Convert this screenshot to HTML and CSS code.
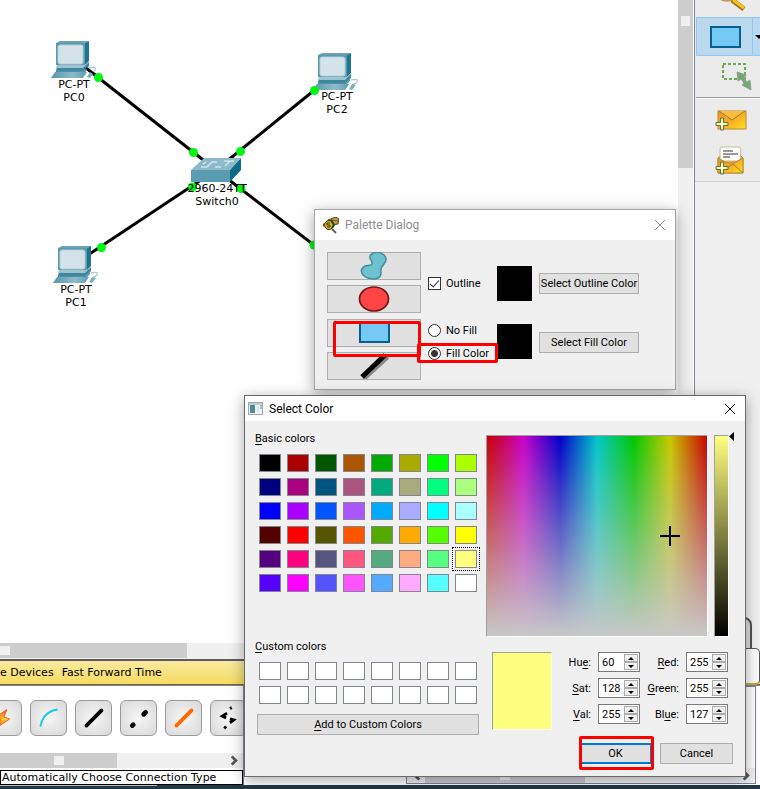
FILE: index.html
```html
<!DOCTYPE html>
<html lang="en">
<head>
<meta charset="utf-8">
<title>Network Simulator</title>
<link rel="stylesheet" href="styles.css">
</head>
<body>
<svg class="defs" aria-hidden="true">
  <defs>
    <linearGradient id="env" x1="0" x2="1" y1="0" y2="1"><stop offset="0" stop-color="#ef9226"/><stop offset=".45" stop-color="#f5a826"/><stop offset="1" stop-color="#ffe01a"/></linearGradient>
    <linearGradient id="base" x1="0" x2="1"><stop offset="0" stop-color="#5795ab"/><stop offset=".6" stop-color="#8fbccb"/><stop offset="1" stop-color="#5e9db2"/></linearGradient>
    <linearGradient id="bolt" x1="0" x2="0" y1="0" y2="1"><stop offset="0" stop-color="#ff3d1f"/><stop offset=".5" stop-color="#ffd02a"/><stop offset="1" stop-color="#f03020"/></linearGradient>
    <symbol id="pc" viewBox="0 0 46 38">
      <path d="M5 2 9 0H38L34 3H5z" fill="#6ba3b6"/>
      <path d="M33 3 38 0V20L33 25z" fill="#1d7690"/>
      <path d="M5 2H34V24H5z" fill="#5b99b0"/>
      <rect x="7" y="4" width="25" height="19" rx="2" fill="#d4e3ea" stroke="#b4cfd9"/>
      <path d="M6 25H33L38 21V25L33 30H5z" fill="#3f879e"/>
      <path d="M6 24H33L36 23 32 27H5z" fill="#9cc3d0"/>
      <path d="M5 30H33L37 26V28L32 33H4z" fill="#4f92a8"/>
      <path d="M4 31H36L32 37H0z" fill="url(#base)"/>
      <path d="M38 27Q46 25 44 29 43 31 40 31" fill="none" stroke="#a9c9d4" stroke-width="1.3"/>
      <path d="M39 31 43 32 39 37 36 36z" fill="#7aafc0"/>
    </symbol>
    <symbol id="plus" viewBox="0 0 14 14">
      <path d="M5.5 1H8.500V5.500H13V8.500H8.500V13H5.500V8.500H1V5.500H5.500z" fill="#e7f06b" stroke="#5d7050"/>
      <path d="M7 3V11M3 7H11" stroke="#fff" stroke-width="1"/>
    </symbol>
  </defs>
</svg>

<main class="app">
  <div class="upper">
    <section class="main">
      <div class="work">
        <div class="canvas">
          <svg class="links" width="678" height="643" viewBox="0 0 678 643" aria-hidden="true">
            <g stroke="#000" stroke-width="3"><path d="M86 68 216 170"/><path d="M322 84 216 170"/><path d="M88 255 216 170"/><path d="M216 170 340 265"/></g>
            <use href="#pc" x="51" y="41" width="46" height="38"/>
            <use href="#pc" x="313" y="53" width="46" height="38"/>
            <use href="#pc" x="53" y="246" width="46" height="38"/>
            <path d="M86 68 96 75" stroke="#000" stroke-width="2"/>
            <g>
              <path d="M191 170 204 158H241L230 170z" fill="#8eb9c9"/>
              <path d="M241 158V170L230 182V170z" fill="#0d6d88"/>
              <path d="M191 170H230V182H191z" fill="#5b9bb2"/>
              <path d="M201 167h6l5-5h5M215 167h6M225 166l5-5h4M203 164l3-2M229 161h-5" stroke="#d2e6ed" stroke-width="1.5" fill="none"/>
            </g>
            <g fill="#00f710"><circle cx="98.500" cy="77.500" r="4.5"/><circle cx="193.500" cy="152.500" r="4.5"/><circle cx="240.500" cy="151.500" r="4.5"/><circle cx="314.500" cy="90.500" r="4.5"/><circle cx="101.500" cy="247.500" r="4.5"/><circle cx="192.500" cy="187" r="4.5"/><circle cx="241" cy="188.500" r="4.5"/><circle cx="314" cy="245" r="4.5"/></g>
          </svg>
          <p class="node pc0">PC-PT<br>PC0</p>
          <p class="node pc2">PC-PT<br>PC2</p>
          <p class="node pc1">PC-PT<br>PC1</p>
          <p class="node sw">2960-24TT<br>Switch0</p>
        </div>
        <div class="vscroll"><div class="thumb"><i class="grip"></i></div></div>
      </div>
      <div class="hscroll"><div class="thumb"><i class="grip"></i></div></div>
    </section>
    <aside class="side">
      <div class="drawer">
        <button class="item zoom" aria-label="Inspect"><svg width="34" height="12" viewBox="0 0 34 12"><path d="M6 -3Q9 2 18 -1" fill="none" stroke="#c79b52" stroke-width="3"/><path d="M18 0 30 9" stroke="#9a741c" stroke-width="5"/><path d="M19 0 30 8" stroke="#f6c223" stroke-width="3"/></svg></button>
        <button class="item active" aria-label="Draw rectangle"><svg width="31" height="22" viewBox="0 0 31 22"><rect x="1" y="1" width="29" height="20" fill="#76c9f5" stroke="#06608f" stroke-width="2"/></svg><svg class="caret" width="8" height="4" viewBox="0 0 8 4"><path d="M0 0H8L4 4z"/></svg></button>
        <button class="item resize" aria-label="Resize shape"><svg width="30" height="30" viewBox="0 0 30 30"><rect x="1" y="2" width="22" height="15" fill="none" stroke="#69ad50" stroke-width="2" stroke-dasharray="3 2"/><path d="M15 10 24 13 22 16 25 20 28 18 29 28 20 23 22 21 19 17 16 19z" fill="#70aa6c" stroke="#9c9e99"/></svg></button>
        <hr>
        <button class="item mail" aria-label="Add simple message"><svg width="32" height="22" viewBox="0 0 32 22"><rect x="3" y="1" width="28" height="18" fill="url(#env)" stroke="#b98a35"/><path d="M4 1 17 10 30 1" fill="#f6bd3e" stroke="#a77c3a"/><use href="#plus" x="0" y="7" width="14" height="14"/></svg></button>
        <button class="item mail2" aria-label="Add complex message"><svg width="32" height="30" viewBox="0 0 32 30"><path d="M3 12 6 9H25L28 12V27H3z" fill="#f3a52a" stroke="#b98a35"/><path d="M5 3Q5 1 8 1H23Q26 1 26 3L25 15H5z" fill="#fff" stroke="#c8b890"/><path d="M8 5H18M8 8H23M8 11H15" stroke="#9a9a9a" stroke-width="2"/><path d="M3 12 12 17H19L28 12V27H3z" fill="url(#env)" stroke="#b98a35"/><path d="M4 27 18 18 28 27" fill="none" stroke="#a77c3a"/><use href="#plus" x="0" y="15" width="14" height="14"/></svg></button>
      </div>
    </aside>
  </div>
  <div class="timebar"><span>e Devices</span><span>Fast Forward Time</span><i class="tab"></i><i class="mode"></i></div>
  <div class="lower">
    <div class="connections">
      <div class="tools">
        <button class="tool" aria-label="Automatic"><svg viewBox="0 0 37 36"><path d="M22 9 9 18 16 19 10 29 25 19 19 17z" fill="url(#bolt)" stroke="#e8641c"/></svg></button>
        <button class="tool" aria-label="Console"><svg viewBox="0 0 37 36"><path d="M10 27Q13 11 28 9" fill="none" stroke="#14c9f5" stroke-width="2"/></svg></button>
        <button class="tool" aria-label="Straight-through"><svg viewBox="0 0 37 36"><path d="M11 26 27 10" stroke="#000" stroke-width="4" stroke-linecap="round"/></svg></button>
        <button class="tool" aria-label="Cross-over"><svg viewBox="0 0 37 36"><path d="M12 26 13 25M24 14 26 12" stroke="#000" stroke-width="5" stroke-linecap="round"/></svg></button>
        <button class="tool" aria-label="Fiber"><svg viewBox="0 0 37 36"><path d="M11 26 27 10" stroke="#ff6a00" stroke-width="4" stroke-linecap="round"/></svg></button>
        <button class="tool" aria-label="Phone"><svg viewBox="0 0 37 36"><path d="M20 8 22 7M17 13 12 16 16 18M20 19 24 20 20 23M14 29 16 27" fill="none" stroke="#000" stroke-width="3"/></svg></button>
      </div>
      <div class="hscroll small"><div class="thumb"><i class="grip"></i></div><svg class="arrow" viewBox="0 0 8 8"><path d="M2 1 5 4 2 7" fill="none" stroke="#555" stroke-width="2"/></svg></div>
      <p class="status">Automatically Choose Connection Type</p>
    </div>
    <div class="events">
      <div class="hscroll inner"><svg class="arrow" viewBox="0 0 8 8"><path d="M6 1 3 4 6 7" fill="none" stroke="#555" stroke-width="2"/></svg><div class="thumb"><i class="grip"></i></div><svg class="arrow end" viewBox="0 0 8 8"><path d="M2 1 5 4 2 7" fill="none" stroke="#555" stroke-width="2"/></svg></div>
    </div>
  </div>
</main>
<footer class="taskbar"><i></i></footer>

<section class="window palette" aria-label="Palette Dialog">
  <header class="title">
    <svg width="16" height="17" viewBox="0 0 16 17"><path d="M5 3 13 0 16 2 15 7 8 8z" fill="#c79a45" stroke="#5d431d"/><path d="M8 3 15 4" stroke="#7b5a22"/><circle cx="6" cy="8" r="4.5" fill="#d6b820" stroke="#312b12"/><path d="M8 3 11 8 9 11" stroke="#174c1c" stroke-width="2" fill="none"/><path d="M7 6H4V8H7V10H4" fill="none" stroke="#3c3510"/><path d="M9 12 13 16" stroke="#666" stroke-width="2"/><path d="M0 8H2" stroke="#754a35" stroke-width="3"/></svg>
    <h2>Palette Dialog</h2>
    <button class="close" aria-label="Close"><svg width="12" height="12" viewBox="0 0 12 12"><path d="M1 1 11 11M11 1 1 11" stroke="currentColor"/></svg></button>
  </header>
  <div class="palette-body">
    <div class="shapes">
      <button class="btn" aria-label="Freeform"><svg width="30" height="28" viewBox="0 0 30 28"><path d="M14 1Q20 -1 25 3 29 7 25 12 21 16 22 21 22 26 16 27 8 27 4 23 0 17 6 14L12 13Q14 12 12 8 9 4 14 1z" fill="#6fc1cf" stroke="#448e99" stroke-width="1.5"/></svg></button>
      <button class="btn" aria-label="Ellipse"><svg width="32" height="26" viewBox="0 0 32 26"><ellipse cx="16" cy="13" rx="14.5" ry="12" fill="#ff4545" stroke="#751818" stroke-width="1.7"/></svg></button>
      <button class="btn" aria-label="Rectangle"><svg width="31" height="21" viewBox="0 0 31 21"><rect x="1" y="1" width="29" height="19" fill="#76c9f5" stroke="#06608f" stroke-width="2"/></svg></button>
      <button class="btn" aria-label="Line"><svg width="30" height="26" viewBox="0 0 30 26"><path d="M5 26 29 4" stroke="#888" stroke-width="4"/><path d="M3 24 26 2" stroke="#000" stroke-width="5"/></svg></button>
    </div>
    <div class="options">
      <label class="check"><input type="checkbox" checked>Outline</label>
      <div class="black"></div>
      <button class="btn pick">Select Outline Color</button>
      <div class="radios">
        <label class="check"><input type="radio" name="fill">No Fill</label>
        <label class="check"><input type="radio" name="fill" checked>Fill Color</label>
      </div>
      <div class="black"></div>
      <button class="btn pick">Select Fill Color</button>
    </div>
  </div>
  <i class="mark mark-rect"></i><i class="mark mark-fill"></i>
</section>

<section class="window colors" aria-label="Select Color">
  <header class="title">
    <svg width="15" height="13" viewBox="0 0 15 13"><rect x=".5" y=".5" width="14" height="12" fill="#f2f2f2" stroke="#a2a6aa"/><path d="M1 1H14V3H1z" fill="#c5c9cc"/><path d="M2 3H7V11H2z" fill="#498f92"/><path d="M2 3H6L2 8z" fill="#4b83b4"/><path d="M9 4H11V10H9z" fill="#d7e6e2"/><path d="M12 3H14V7H12z" fill="#9fc3de"/></svg>
    <h2>Select Color</h2>
    <button class="close" aria-label="Close"><svg width="12" height="12" viewBox="0 0 12 12"><path d="M1 1 11 11M11 1 1 11" stroke="currentColor"/></svg></button>
  </header>
  <div class="color-body">
    <div class="left">
      <h3><u>B</u>asic colors</h3>
      <div class="grid" id="basic"></div>
      <h3 class="custom-title"><u>C</u>ustom colors</h3>
      <div class="grid" id="custom"></div>
      <button class="btn add"><span><u>A</u>dd to Custom Colors</span></button>
    </div>
    <div class="right">
      <div class="pickers">
        <div class="spectrum"><svg class="cross" width="20" height="20" viewBox="0 0 20 20"><path d="M10 0V20M0 10H20" stroke="#000" stroke-width="2"/></svg></div>
        <div class="value"></div>
        <svg class="pointer" width="5" height="9" viewBox="0 0 5 9"><path d="M5 0V9L0 4.5z"/></svg>
      </div>
      <div class="details">
        <div class="current"></div>
        <div class="fields">
          <label for="hue">Hu<u>e</u>:</label><div class="spin"><input id="hue" value="60"><span><button aria-label="Hue up"></button><button aria-label="Hue down"></button></span></div>
          <label for="red"><u>R</u>ed:</label><div class="spin"><input id="red" value="255"><span><button aria-label="Red up"></button><button aria-label="Red down"></button></span></div>
          <label for="sat"><u>S</u>at:</label><div class="spin"><input id="sat" value="128"><span><button aria-label="Sat up"></button><button aria-label="Sat down"></button></span></div>
          <label for="green"><u>G</u>reen:</label><div class="spin"><input id="green" value="255"><span><button aria-label="Green up"></button><button aria-label="Green down"></button></span></div>
          <label for="val"><u>V</u>al:</label><div class="spin"><input id="val" value="255"><span><button aria-label="Val up"></button><button aria-label="Val down"></button></span></div>
          <label for="blue">Bl<u>u</u>e:</label><div class="spin"><input id="blue" value="127"><span><button aria-label="Blue up"></button><button aria-label="Blue down"></button></span></div>
        </div>
      </div>
      <div class="actions"><button class="btn ok">OK</button><button class="btn">Cancel</button></div>
    </div>
  </div>
  <i class="mark mark-ok"></i>
</section>
<script src="swatches.js"></script>
</body>
</html>
```
FILE: styles.css
```css
* { box-sizing: border-box; }
body { margin: 0; min-height: 100vh; display: flex; flex-direction: column; position: relative; background: #f0f0f0; color: #000; font-family: "DejaVu Sans", sans-serif; font-size: 11px; }
button, input { font: inherit; color: inherit; margin: 0; padding: 0; }
h2, h3, p { margin: 0; font-weight: normal; }
svg { display: block; flex: none; }
u { text-underline-offset: 2px; }
.defs { position: absolute; width: 0; height: 0; }

.app { flex: 1; display: flex; flex-direction: column; }
.upper { flex: 1; display: grid; grid-template-columns: minmax(0, 1fr) 66px; }
.main { display: flex; flex-direction: column; min-width: 0; }
.work { flex: 1; display: flex; background: #fff; }
.canvas { flex: 1; position: relative; overflow: hidden; }
.links { position: absolute; left: 0; top: 0; }
.node { position: absolute; transform: translateX(-50%); text-align: center; line-height: 13px; white-space: nowrap; }
.pc0 { left: 74px; top: 78px; }
.pc2 { left: 337px; top: 90px; }
.pc1 { left: 76px; top: 283px; }
.sw { left: 217px; top: 182px; }

.thumb { background: #cdcdcd; display: flex; }
.grip { background: #f0f0f0; }
.vscroll { width: 16px; background: #f0f0f0; border-right: 1px solid #fff; }
.vscroll .thumb { height: 168px; }
.vscroll .grip { width: 9px; height: 10px; margin: 16px 3px; }
.hscroll { height: 15px; display: flex; align-items: stretch; background: #f0f0f0; }
.hscroll .thumb { width: 187px; align-items: center; }
.hscroll .grip { width: 10px; height: 9px; }
.timebar { position: relative; height: 26px; margin-top: 1px; border-top: 2px solid #5c5c5c; border-bottom: 1px solid #7a6a2c; background: linear-gradient(#faeaa0, #f5dc62); display: flex; align-items: center; gap: 8px; }
.tab { position: absolute; right: 8px; top: -44px; width: 35px; height: 48px; border: 2px solid #555; border-radius: 8px; background: #ddd; }
.mode { position: absolute; right: 0; top: -13px; width: 48px; height: 37px; border: 1px solid #555; border-bottom: 2px solid #c9a936; border-radius: 5px; background: #fcfcfc; }
.lower { display: flex; background: #fff; border-top: 1px solid #7c8595; }
.connections { flex: none; width: 244px; border-right: 1px solid #7c8595; }
.tools { display: flex; gap: 8px; padding: 14px 0 17px; margin-left: -15px; overflow: hidden; }
.tool { width: 37px; height: 36px; flex: none; border: 1px solid #9a9a9a; border-radius: 6px; background: radial-gradient(#f6f6f6, #d8d8d8); }
.hscroll.small { justify-content: space-between; }
.hscroll.small .thumb { width: 117px; justify-content: center; }
.arrow { width: 11px; height: 11px; align-self: center; margin-right: 3px; }
.status { margin-top: 2px; height: 15px; line-height: 13px; border: 1px solid #000; padding-left: 1px; white-space: nowrap; }
.events { flex: 1; display: flex; align-items: flex-end; margin: 0 4px 1px 162px; border: 1px solid #7c8595; }
.hscroll.inner { flex: 1; padding-left: 4px; }
.hscroll.inner .thumb { width: 160px; justify-content: center; }
.arrow.end { margin-left: auto; }

.side { border-left: 1px solid #7c8595; }
.drawer { padding-left: 1px; border-bottom: 1px solid #cfcfcf; background: #ebebeb; }
.item { display: flex; width: 100%; border: 0; background: none; align-items: center; overflow: hidden; }
.item.zoom { height: 17px; padding-left: 18px; align-items: flex-start; }
.item.active { height: 39px; border: 1px solid #90c8f6; border-right: 0; background: #bcd8ee; padding-left: 13px; position: relative; }
.item.active::after { content: ""; position: absolute; left: 55px; top: 0; bottom: 0; border-left: 1px solid #90c8f6; }
.caret { margin-left: 14px; }
.item.resize { height: 41px; padding-left: 26px; }
.drawer hr { margin: 0; border: 0; border-top: 1px solid #9c9c9c; border-bottom: 1px solid #fff; }
.item.mail { height: 44px; padding-left: 19px; }
.item.mail2 { height: 38px; padding-left: 19px; padding-bottom: 3px; }
.taskbar { height: 4px; background: #1f3945; display: flex; }
.taskbar i { width: 157px; border-top: 1px solid #b8b8b8; }

.window { position: absolute; background: #f0f0f0; font-family: Roboto, sans-serif; font-size: 11px; box-shadow: 0 3px 14px rgba(0, 0, 0, .35); }
.title { display: flex; align-items: center; background: #fff; gap: 6px; }
.title h2 { flex: 1; font-size: 12px; }
.close { border: 0; background: none; display: flex; }
.btn { border: 1px solid #adadad; background: #e1e1e1; display: flex; align-items: center; justify-content: center; height: 21px; white-space: nowrap; }
.mark { position: absolute; border: 3px solid #f00; border-radius: 2px; pointer-events: none; }

.palette { left: 314px; top: 209px; width: 362px; border: 1px solid #a5a5a5; }
.palette .title { height: 30px; padding: 0 9px 0 8px; color: #8e8e8e; }
.palette-body { display: flex; gap: 7px; padding: 12px 12px 9px; }
.shapes { display: flex; flex-direction: column; justify-content: space-between; min-height: 128px; }
.shapes .btn { width: 94px; height: 28px; }
.options { display: grid; grid-template-columns: 69px 35px 100px; row-gap: 23px; align-content: start; align-items: center; padding-top: 14px; }
.black { width: 35px; height: 35px; background: #000; align-self: start; }
.pick { width: 100px; margin-left: 7px; }
.check { display: flex; align-items: center; gap: 5px; white-space: nowrap; line-height: 13px; }
.radios { display: flex; flex-direction: column; gap: 10px; }
.check input { appearance: none; width: 13px; height: 13px; border: 1px solid #333; background: #fff; position: relative; flex: none; }
.check input[type="radio"] { border-radius: 50%; }
.check input[type="radio"]:checked { background: radial-gradient(circle, #333 3px, #fff 4px); }
.check input[type="checkbox"]:checked::after { content: ""; position: absolute; left: 3px; top: 0; width: 4px; height: 8px; border: solid #333; border-width: 0 1px 1px 0; transform: rotate(42deg); }
.mark-rect { left: 18px; top: 111px; width: 88px; height: 36px; }
.mark-fill { left: 102px; top: 133px; width: 81px; height: 20px; }

.colors { left: 244px; top: 395px; width: 502px; border: 1px solid #6a6a6a; }
.colors .title { height: 25px; padding: 0 9px 0 3px; }
.color-body { display: flex; gap: 7px; padding: 10px 10px 12px; }
.left { width: 224px; }
.left h3 { font-size: 11px; line-height: 15px; }
.grid { display: grid; grid-template-columns: repeat(8, 22px); gap: 6px; padding: 8px 0 0 4px; }
.swatch { width: 22px; height: 18px; border: 1px solid #82868f; background: var(--c); }
.swatch.selected { outline: 1px dotted #000; outline-offset: 2px; }
.left .custom-title { margin-top: 47px; }
.add { width: 222px; margin: 10px 0 0 2px; }
.right { flex: 1; padding-top: 4px; }
.pickers { display: flex; }
.spectrum { position: relative; width: 222px; height: 202px; border: 1px solid #a0a0a0; border-right-color: #fff; border-bottom-color: #fff; background: linear-gradient(rgba(200, 200, 200, 0), #c8c8c8), linear-gradient(90deg, #c80000, #c800c8, #0000c8, #00c8c8, #00c800, #c8c800, #c80000); }
.cross { position: absolute; left: 173px; top: 90px; }
.value { width: 15px; margin-left: 6px; border: 1px solid #a0a0a0; border-right-color: #fff; border-bottom-color: #fff; background: linear-gradient(#ffff7f, #000); }
.pointer { margin-top: -3px; }
.details { display: flex; gap: 14px; margin-top: 15px; padding-left: 6px; }
.current { width: 60px; height: 78px; border: 1px solid #a0a0a0; border-right-color: #fff; border-bottom-color: #fff; background: #ffff7f; }
.fields { display: grid; grid-template-columns: 25px 42px 32px 42px; gap: 6px 7px; align-content: start; align-items: center; }
.fields label { text-align: right; line-height: 15px; }
.spin { display: flex; width: 42px; height: 20px; border: 1px solid #7a7a7a; background: #fff; padding: 1px; }
.spin input { flex: 1; min-width: 0; border: 0; padding-left: 2px; background: none; outline: 0; }
.spin span { display: flex; flex-direction: column; width: 14px; }
.spin button { flex: 1; min-height: 0; border: 1px solid #adadad; background: #f0f0f0; display: flex; align-items: center; justify-content: center; }
.spin button::after { content: ""; border: solid transparent; border-width: 0 3px 3px; border-bottom-color: #000; }
.spin button + button::after { border-width: 3px 3px 0; border-top-color: #000; }
.actions { display: flex; justify-content: flex-end; gap: 8px; margin-top: 13px; padding-right: 2px; }
.actions .btn { width: 73px; }
.actions .ok { border: 2px solid #0078d7; }
.mark-ok { left: 334px; top: 340px; width: 75px; height: 34px; }
```
FILE: swatches.js
```js
const basic = [
  "#000000 #aa0000 #005500 #aa5500 #00aa00 #aaaa00 #00ff00 #aaff00",
  "#00007f #aa007f #00557f #aa557f #00aa7f #aaaa7f #00ff7f #aaff7f",
  "#0000ff #aa00ff #0055ff #aa55ff #00aaff #aaaaff #00ffff #aaffff",
  "#550000 #ff0000 #555500 #ff5500 #55aa00 #ffaa00 #55ff00 #ffff00",
  "#55007f #ff007f #55557f #ff557f #55aa7f #ffaa7f #55ff7f #ffff7f",
  "#5500ff #ff00ff #5555ff #ff55ff #55aaff #ffaaff #55ffff #ffffff"
].join(" ").split(" ");

function fill(id, colors) {
  const grid = document.getElementById(id);
  for (const color of colors) {
    const swatch = document.createElement("button");
    swatch.className = color === "#ffff7f" ? "swatch selected" : "swatch";
    swatch.style.setProperty("--c", color);
    swatch.setAttribute("aria-label", color);
    grid.append(swatch);
  }
}

fill("basic", basic);
fill("custom", Array(16).fill("#ffffff"));
```
